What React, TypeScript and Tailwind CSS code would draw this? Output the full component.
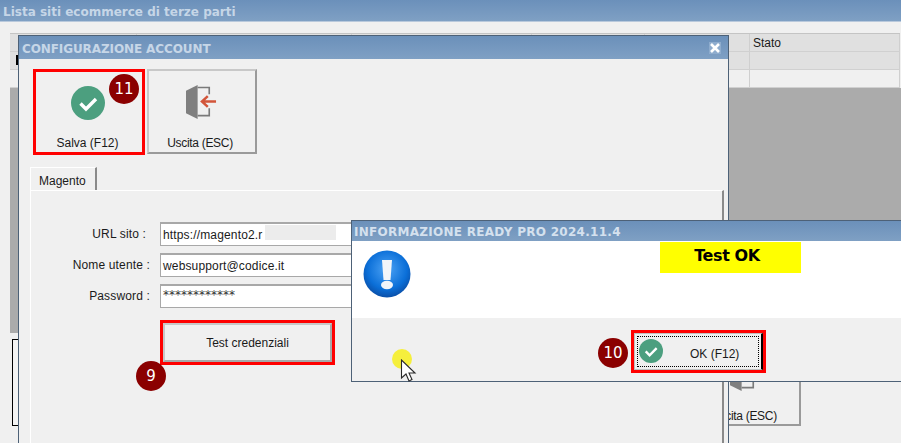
import React from "react";

const COLS = ["w-[127px]", "w-[215px]", "w-[180px]", "w-[113px]", "w-[105px]", "w-[150px]"];

function Badge({ n, className }: { n: string; className: string }) {
  return (
    <div className={`absolute z-10 w-[30px] h-[30px] rounded-full bg-[#8b0000] text-white flex items-center justify-center text-[15px] font-['DejaVu_Sans',sans-serif] ${className}`}>
      {n}
    </div>
  );
}

function CheckIcon({ size }: { size: number }) {
  return (
    <svg width={size} height={size} viewBox="0 0 34 34">
      <circle cx="17" cy="17" r="17" fill="#4c9f7f" />
      <path d="M9.5 17.5l5.5 5.5 10-10" fill="none" stroke="#fff" strokeWidth="3.4" />
    </svg>
  );
}

function DoorIcon() {
  return (
    <svg width="31" height="34" viewBox="0 0 32 35">
      <path d="M12 2.5h12v7M24 24v7.5h-12" fill="none" stroke="#7a7a7a" strokeWidth="1.7" />
      <path d="M0 6l12-6v35l-12-6z" fill="#7f7f7f" />
      <path d="M31 17h-14M22.5 11.5l-6 5.5 6 5.5" fill="none" stroke="#d2553a" strokeWidth="2.6" />
    </svg>
  );
}

function InfoIcon() {
  return (
    <svg width="48" height="48" viewBox="0 0 48 48">
      <defs>
        <radialGradient id="blue" cx="50%" cy="40%" r="60%">
          <stop offset="0%" stopColor="#4da3f5" />
          <stop offset="70%" stopColor="#0b6fd8" />
          <stop offset="100%" stopColor="#0a4fa8" />
        </radialGradient>
      </defs>
      <circle cx="24" cy="24" r="23.5" fill="url(#blue)" />
      <path d="M19 10h10l-1.5 20h-7z" fill="#f2f5f9" />
      <ellipse cx="24" cy="35" rx="6" ry="4.2" fill="#f2f5f9" />
    </svg>
  );
}

function Field({ label, value, pad, redact, stars }: { label: string; value: string; pad: string; redact?: boolean; stars?: boolean }) {
  return (
    <div className="flex items-center h-6">
      <div className={`w-[121px] text-right whitespace-nowrap tracking-[0.15px] ${pad}`}>{label}</div>
      <div className={`ml-[7px] w-[300px] h-6 bg-white border border-[#a8a8a8] border-t-2 pl-[2px] flex relative tracking-[0.15px] ${stars ? "items-start pt-[3px] text-[#333] font-['DejaVu_Sans',sans-serif] tracking-normal" : "items-center"}`}>
        {value}
        {redact && <div className="absolute left-[104px] top-[1px] w-[71px] h-[15px] bg-[#ececec]" />}
      </div>
    </div>
  );
}

export default function App() {
  return (
    <div className="relative w-[901px] h-[443px] overflow-hidden bg-[#f0f0f0] text-[12px] leading-none text-[#1a1a1a] font-['Liberation_Sans',sans-serif]">
      {/* finestra sotto */}
      <div className="h-[22px] bg-gradient-to-b from-[#6b90ba] to-[#7fa0c4] border-b border-[#b9c9dc] pl-[3px] pt-[3px] flex items-center font-['DejaVu_Sans',sans-serif] font-bold text-[#c6d6e7] whitespace-nowrap">
        Lista siti ecommerce di terze parti
      </div>
      <div className="pt-[11px] pl-[10px]">
        <div className="w-[890px] border-t border-[#c4c4c4]">
          {[0, 1, 2].map((r) => (
            <div key={r} className={`flex h-[18px] border-b border-[#d0d0d0] ${r === 2 ? "bg-[#f0f0f0]" : "bg-[#e0e0e0]"}`}>
              {COLS.map((w, i) => (
                <div key={i} className={`${w} border-r border-[#cfcfcf] pl-[3px] flex items-center`}>
                  {r === 0 && i === 5 ? "Stato" : ""}
                </div>
              ))}
            </div>
          ))}
        </div>
        <div className="w-[891px] h-[245px] bg-[#ababab]" />
      </div>
      <div className="absolute left-[16px] top-[55px] w-[2px] h-[10px] bg-black" />
      <div className="absolute left-[12px] top-[339px] w-[20px] h-[87px] bg-[#f4f4f4] border border-black" />
      <div className="absolute left-[691px] top-[341px] w-[110px] h-[85px] border-2 border-[#c8c8c8] border-r-[#9a9a9a] border-b-[#9a9a9a] flex flex-col items-center">
        <div className="mt-[14px] mr-[2px]"><DoorIcon /></div>
        <div className="mt-[19px] mr-[4px] tracking-[-0.3px]">Uscita (ESC)</div>
      </div>

      {/* configurazione account */}
      <div className="absolute left-[18px] top-[35px] w-[711px] h-[420px] bg-[#f0f0f0] border border-[#4d6177] border-b-0 flex flex-col">
        <div className="h-[23px] shrink-0 bg-gradient-to-b from-[#6b90ba] to-[#7fa0c4] pl-[3px] pr-[7px] pt-[3px] flex items-center justify-between font-['DejaVu_Sans',sans-serif] font-bold text-[#c6d6e7] whitespace-nowrap tracking-[-0.1px]">
          CONFIGURAZIONE ACCOUNT
          <div className="w-3 h-3 mb-[2px] bg-[#8eaccd] flex items-center justify-center">
            <svg width="10" height="10" viewBox="0 0 10 10"><path d="M1 1l8 8M9 1l-8 8" stroke="#fff" strokeWidth="2.6" /></svg>
          </div>
        </div>
        <div className="flex pl-[14px] pt-[10px] gap-[2px]">
          <div className="relative w-[112px] h-[86px] border-[3px] border-[#ff0000] flex flex-col items-center">
            <div className="mt-[14px] mr-[3px]"><CheckIcon size={34} /></div>
            <div className="mt-[17px] mr-[3px]">Salva (F12)</div>
            <Badge n="11" className="left-[73px] top-[2px]" />
          </div>
          <div className="w-[110px] h-[85px] border-2 border-[#c8c8c8] border-r-[#9a9a9a] border-b-[#9a9a9a] flex flex-col items-center">
            <div className="mt-[14px] mr-[2px]"><DoorIcon /></div>
            <div className="mt-[18px] mr-[4px] tracking-[-0.3px]">Uscita (ESC)</div>
          </div>
        </div>
        <div className="ml-[11px] mt-[12px] w-[694px] flex-1 flex flex-col">
          <div className="w-[67px] h-[23px] bg-[#f0f0f0] border-t border-l border-white border-r-2 border-r-[#8a8a8a] flex items-center pl-2 pt-[3px] shrink-0">Magento</div>
          <div className="flex-1 border-t border-l border-white border-r-2 border-r-[#8a8a8a] pl-[1px] pt-[31px]">
            <div className="flex flex-col gap-[7px]">
              <Field label="URL sito :" value="https://magento2.r" pad="pr-[7px]" redact />
              <Field label="Nome utente :" value="websupport@codice.it" pad="pr-[3px]" />
              <Field label="Password :" value="************" pad="pr-[3px]" stars />
            </div>
            <div className="relative ml-[128px] mt-[12px] w-[175px] h-[45px] border-[3px] border-[#ff0000]">
              <div className="h-full border-2 border-[#c8c8c8] border-r-[#a8a8a8] border-b-[#a8a8a8] flex items-center justify-center">Test credenziali</div>
              <Badge n="9" className="left-[-27px] top-[38px]" />
            </div>
          </div>
        </div>
      </div>

      {/* informazione */}
      <div className="absolute left-[351px] top-[220px] w-[560px] h-[162px] bg-[#f0f0f0] border border-[#4d6177] flex flex-col">
        <div className="h-5 shrink-0 bg-gradient-to-b from-[#6b90ba] to-[#7fa0c4] pl-[2px] pt-[2px] flex items-center font-['DejaVu_Sans',sans-serif] font-bold text-[#d5e1ee] whitespace-nowrap tracking-[0.28px]">
          INFORMAZIONE READY PRO 2024.11.4
        </div>
        <div className="h-[77px] shrink-0 bg-white pl-[11px] flex relative">
          <div className="mt-[9px]"><InfoIcon /></div>
          <div className="absolute left-[308px] top-[1px] w-[141px] h-[31px] bg-[#ffff00] text-black font-bold text-[16px] flex items-center justify-center pr-[7px] pb-[4px] tracking-[-0.4px] font-['DejaVu_Sans',sans-serif]">
            Test OK
          </div>
        </div>
        <div className="pl-[279px] pt-[12px]">
          <div className="relative w-[135px] h-[43px] border-[3px] border-[#ff0000]">
            <div className="h-full bg-[#f0f0f0] border border-[#c0c0c0] border-r-2 border-r-black p-[2px]">
              <div className="h-full border border-dotted border-black flex items-center relative">
                <div className="absolute left-[1px] top-[2px]"><CheckIcon size={24} /></div>
                <div className="ml-[52px] mt-[4px]">OK (F12)</div>
              </div>
            </div>
            <Badge n="10" className="left-[-36px] top-[5px]" />
          </div>
        </div>
      </div>

      {/* cursore */}
      <div className="absolute left-[392px] top-[349px] w-5 h-5 rounded-full bg-[#f5ef3c]" />
      <svg className="absolute left-[400px] top-[359px]" width="18" height="24" viewBox="0 0 18 24">
        <path d="M1.5 1v18l4.5-4 3 7 3-1.5-3-6.5h6z" fill="#fff" stroke="#2a2a2a" strokeWidth="1.1" />
      </svg>
    </div>
  );
}
